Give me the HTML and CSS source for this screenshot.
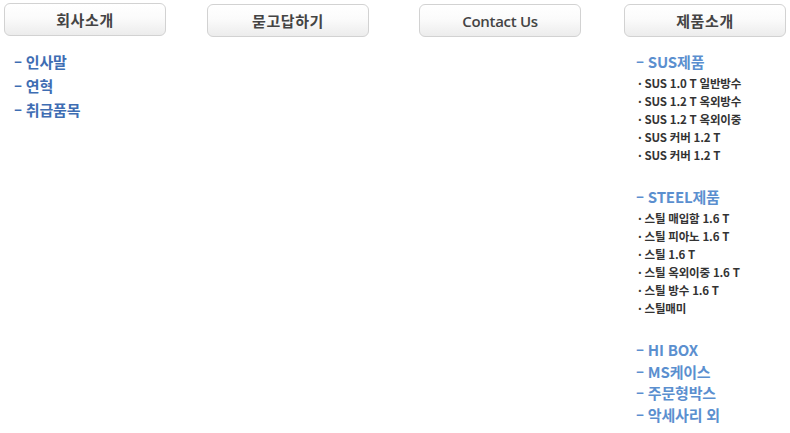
FILE: index.html
```html
<!DOCTYPE html>
<html lang="ko">
<head>
<meta charset="utf-8">
<link rel="stylesheet" href="styles.css">
</head>
<body>
<div class="menu">
  <div class="col col1">
    <div class="btn">회사소개</div>
    <ul class="list">
      <li>– 인사말</li>
      <li>– 연혁</li>
      <li>– 취급품목</li>
    </ul>
  </div>
  <div class="col col2">
    <div class="btn">묻고답하기</div>
  </div>
  <div class="col col3">
    <div class="btn btn-en">Contact Us</div>
  </div>
  <div class="col col4">
    <div class="btn">제품소개</div>
    <div class="group group-first">
      <div class="head">– SUS제품</div>
      <ul class="sub">
        <li>· SUS 1.0 T 일반방수</li>
        <li>· SUS 1.2 T 옥외방수</li>
        <li>· SUS 1.2 T 옥외이중</li>
        <li>· SUS 커버 1.2 T</li>
        <li>· SUS 커버 1.2 T</li>
      </ul>
    </div>
    <div class="group group-next">
      <div class="head">– STEEL제품</div>
      <ul class="sub">
        <li>· 스틸 매입함 1.6 T</li>
        <li>· 스틸 피아노 1.6 T</li>
        <li>· 스틸 1.6 T</li>
        <li>· 스틸 옥외이중 1.6 T</li>
        <li>· 스틸 방수 1.6 T</li>
        <li>· 스틸매미</li>
      </ul>
    </div>
    <ul class="more">
      <li>– HI BOX</li>
      <li>– MS케이스</li>
      <li>– 주문형박스</li>
      <li>– 악세사리 외</li>
    </ul>
  </div>
</div>
</body>
</html>
```
FILE: styles.css
```css
html, body {
  margin: 0;
  padding: 0;
  background: #ffffff;
}
body {
  font-family: "Noto Sans CJK KR", "Noto Sans", sans-serif;
  font-weight: 700;
}
ul {
  list-style: none;
  margin: 0;
  padding: 0;
}
.menu {
  display: grid;
  grid-template-columns: 203px 212px 205px 162px;
  padding: 4px 0 0 4px;
  align-items: start;
}
.btn {
  width: 160px;
  height: 31px;
  border: 1px solid #d2d2d2;
  border-radius: 6px;
  background: linear-gradient(#ffffff 0%, #fbfbfb 45%, #ececec 100%);
  display: flex;
  align-items: center;
  justify-content: center;
  font-size: 15px;
  color: #444444;
  letter-spacing: 0.6px;
}
.btn-en {
  font-family: "Open Sans", "Noto Sans", sans-serif;
  font-size: 15px;
  font-weight: 600;
  letter-spacing: -0.3px;
}
.col1 .btn { margin-top: -1px; }
.list {
  padding: 14px 0 0 10px;
}
.list li {
  font-size: 15px;
  line-height: 24px;
  color: #3e6db3;
  letter-spacing: -0.2px;
}
.group {
  padding-left: 12px;
}
.group-first {
  margin-top: 13px;
}
.group-next {
  margin-top: 21px;
}
.head {
  font-size: 15px;
  line-height: 24px;
  color: #5b8fcf;
  letter-spacing: -0.2px;
}
.sub {
  padding-left: 2px;
}
.sub li {
  font-size: 11.5px;
  line-height: 18px;
  color: #333333;
  letter-spacing: -0.2px;
}
.more {
  margin-top: 22px;
  padding-left: 12px;
}
.more li {
  font-size: 15px;
  line-height: 21.7px;
  color: #5b8fcf;
  letter-spacing: -0.2px;
}
```
